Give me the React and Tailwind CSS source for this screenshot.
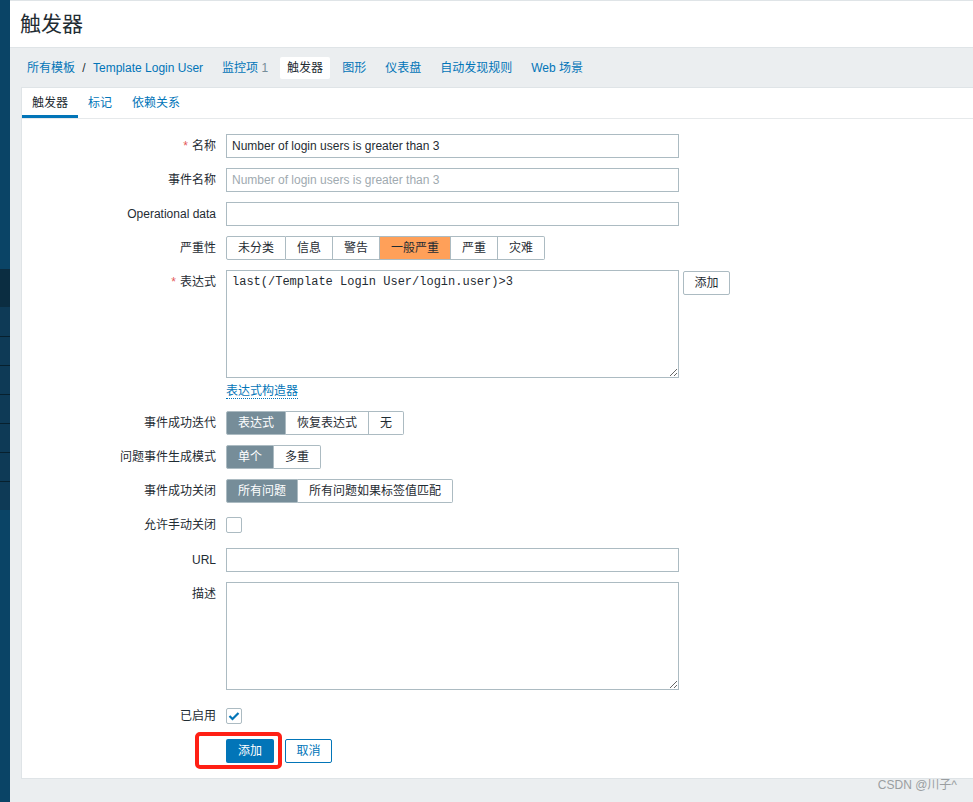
import React from "react";

const label = "w-[194px] shrink-0 pr-0 text-right leading-[24px]";
const input =
  "h-[24px] w-[453px] border border-[#acbbc2] px-[5px] text-[12px] text-[#1f2c33] outline-none placeholder:text-[#a0aab0]";

function Row({ children, name, required, className = "" }) {
  return (
    <div className={"flex items-start gap-[10px] " + className}>
      <div className={label}>
        {required && <span className="mr-[4px] text-[#e45959]">*</span>}
        {name}
      </div>
      {children}
    </div>
  );
}

function Segments({ items, active, widths }) {
  return (
    <div className="flex h-[24px]">
      {items.map((t, i) => (
        <div
          key={t}
          className={
            "flex items-center justify-center border-y border-r border-[#acbbc2] " +
            (i === 0 ? "border-l rounded-l-[2px] " : "") +
            (i === items.length - 1 ? "rounded-r-[2px] " : "") +
            (i === active ? "bg-[#768d99] text-white border-[#768d99] " : "bg-white ") +
            widths[i]
          }
        >
          {t}
        </div>
      ))}
    </div>
  );
}

function Check({ checked }) {
  return (
    <div className="flex h-[16px] w-[16px] items-center justify-center rounded-[2px] border border-[#acbbc2] bg-white">
      {checked && (
        <svg width="12" height="10" viewBox="0 0 12 10">
          <polyline points="1.5,5 4.5,8 10.5,2" fill="none" stroke="#0275b8" strokeWidth="2.2" />
        </svg>
      )}
    </div>
  );
}

export default function App() {
  return (
    <div className="relative flex h-[802px] w-[973px] overflow-hidden font-['Liberation_Sans','Noto_Sans_CJK_SC',sans-serif] text-[12px] text-[#1f2c33]">
      <aside className="flex w-[10px] shrink-0 flex-col bg-[#0a4466]">
        <div className="h-[269px]" />
        <div className="h-[38px] bg-[#0b2d41]" />
        <div className="h-[29px] bg-[#0e3a56]" />
        {[0, 1, 2, 3, 4, 5].map((i) => (
          <div key={i} className="h-[29px] border-t border-[#07202e] bg-[#0e3a56]" />
        ))}
        <div className="flex-1" />
      </aside>

      <div className="flex flex-1 flex-col bg-[#ebeef0]">
        <header className="flex h-[47px] items-center border-t border-[#dfe4e7] bg-white pl-[10px] text-[21px]">
          触发器
        </header>

        <nav className="flex h-[40px] items-center gap-[5px] border-t border-[#dfe4e7] pl-[10px]">
          <div className="px-[7px] text-[#0275b8]">
            所有模板 <span className="mx-[4px] text-[#1f2c33]">/</span> Template Login User
          </div>
          <div className="px-[7px] text-[#0275b8]">
            监控项 <span className="text-[#768d99]">1</span>
          </div>
          <div className="flex h-[22px] items-center rounded-[2px] bg-white px-[7px]">触发器</div>
          <div className="px-[7px] text-[#0275b8]">图形</div>
          <div className="px-[7px] text-[#0275b8]">仪表盘</div>
          <div className="px-[7px] text-[#0275b8]">自动发现规则</div>
          <div className="px-[7px] text-[#0275b8]">Web 场景</div>
        </nav>

        <div className="flex flex-1 pb-[23px] pl-[11px]">
          <div className="flex-1 border-y border-l border-[#dfe4e7] bg-white">
            <div className="flex h-[31px] border-b border-[#e6e9eb]">
              <div className="flex items-center border-b-[3px] border-[#0275b8] px-[10px] pt-[3px]">触发器</div>
              <div className="flex items-center px-[10px] text-[#0275b8]">标记</div>
              <div className="flex items-center px-[10px] text-[#0275b8]">依赖关系</div>
            </div>

            <div className="flex flex-col pt-[15px]">
              <Row name="名称" required className="mb-[10px]">
                <input className={input} defaultValue="Number of login users is greater than 3" />
              </Row>
              <Row name="事件名称" className="mb-[10px]">
                <input className={input} placeholder="Number of login users is greater than 3" />
              </Row>
              <Row name="Operational data" className="mb-[10px]">
                <input className={input} />
              </Row>
              <Row name="严重性" className="mb-[10px]">
                <div className="flex h-[24px]">
                  {[
                    ["未分类", "w-[60px] border-l rounded-l-[2px]"],
                    ["信息", "w-[47px]"],
                    ["警告", "w-[47px]"],
                    ["一般严重", "bg-[#ffa059] border-[#768d99] border-l -ml-px w-[72px]"],
                    ["严重", "w-[47px]"],
                    ["灾难", "w-[47px] rounded-r-[2px]"],
                  ].map(([t, c]) => (
                    <div
                      key={t}
                      className={"flex items-center justify-center border-y border-r border-[#acbbc2] " + c}
                    >
                      {t}
                    </div>
                  ))}
                </div>
              </Row>
              <Row name="表达式" required>
                <div className="flex flex-col">
                  <div className="flex items-start gap-[4px]">
                    <textarea
                      className="h-[108px] w-[453px] border border-[#acbbc2] px-[5px] py-[4px] font-['Liberation_Mono',monospace] text-[12px] leading-[14px] text-[#1f2c33] outline-none"
                      defaultValue="last(/Template Login User/login.user)>3"
                    />
                    <button className="mt-px h-[24px] w-[47px] rounded-[2px] border border-[#acbbc2] bg-white">
                      添加
                    </button>
                  </div>
                  <div className="mt-[6px] mb-[12px] self-start border-b border-dotted border-[#0275b8] leading-[14px] text-[#0275b8]">
                    表达式构造器
                  </div>
                </div>
              </Row>
              <Row name="事件成功迭代" className="mb-[10px]">
                <Segments items={["表达式", "恢复表达式", "无"]} active={0} widths={["w-[60px]", "w-[83px]", "w-[35px]"]} />
              </Row>
              <Row name="问题事件生成模式" className="mb-[10px]">
                <Segments items={["单个", "多重"]} active={0} widths={["w-[48px]", "w-[47px]"]} />
              </Row>
              <Row name="事件成功关闭" className="mb-[10px]">
                <Segments items={["所有问题", "所有问题如果标签值匹配"]} active={0} widths={["w-[72px]", "w-[155px]"]} />
              </Row>
              <Row name="允许手动关闭" className="mb-[11px]">
                <div className="flex h-[24px] items-center">
                  <Check />
                </div>
              </Row>
              <Row name="URL" className="mb-[10px]">
                <input className={input} />
              </Row>
              <Row name="描述" className="mb-[14px]">
                <textarea className="h-[108px] w-[453px] border border-[#acbbc2] px-[5px] py-[4px] text-[12px] outline-none" />
              </Row>
              <Row name="已启用" className="mb-[11px]">
                <div className="flex h-[24px] items-center">
                  <Check checked />
                </div>
              </Row>
              <div className="flex gap-[10px]">
                <div className="w-[194px] shrink-0" />
                <div className="relative flex gap-[11px]">
                  <div className="absolute left-[-31px] top-[-7px] h-[37px] w-[87px] rounded-[5px] border-[4px] border-[#ff2015]" />
                  <button className="h-[24px] w-[48px] rounded-[2px] bg-[#0275b8] text-white">添加</button>
                  <button className="h-[24px] w-[47px] rounded-[2px] border border-[#0275b8] bg-white text-[#0275b8]">
                    取消
                  </button>
                </div>
              </div>
            </div>
          </div>
        </div>
      </div>

      <div className="absolute bottom-[8px] right-[16px] text-[12px] text-[#9a9ea1]">CSDN @川子^</div>
    </div>
  );
}
